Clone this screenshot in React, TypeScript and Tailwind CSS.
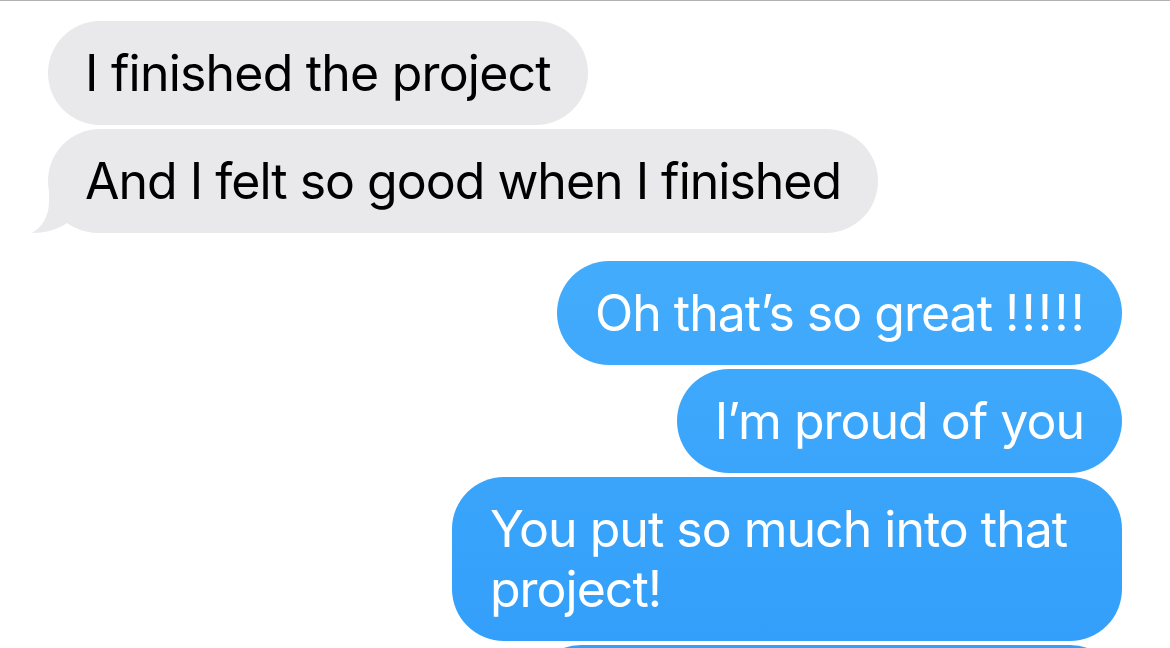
const font = { fontFamily: "Inter, 'Noto Sans', sans-serif" };

function Tail() {
	// iMessage-style tail on the last received bubble
	return (
		<svg
			className="absolute left-[-16px] bottom-0"
			width="70"
			height="60"
			viewBox="0 0 70 60"
			aria-hidden="true"
		>
			<path
				d="M17 0 L17 28 C17 44 10 54 0 60 C12 60 25 57 35 50 C45 57 56 60 70 60 L70 0 Z"
				fill="#e9e9eb"
			/>
		</svg>
	);
}

function Received({ children, tail }: { children: React.ReactNode; tail?: boolean }) {
	return (
		<div className="relative">
			{tail && <Tail />}
			<div className="relative rounded-[52px] bg-[#e9e9eb] px-[37px] py-[22px] text-[50px] leading-[60px] tracking-[-1px] text-black">
				{children}
			</div>
		</div>
	);
}

function Sent({ children, className }: { children?: React.ReactNode; className?: string }) {
	return (
		<div
			className={
				"rounded-[52px] bg-fixed bg-gradient-to-b from-[#4db4fd] to-[#339ffa] px-[38px] py-[22px] text-[50px] leading-[60px] tracking-[-1px] text-white " +
				(className ?? "")
			}
		>
			{children}
		</div>
	);
}

export default function App() {
	return (
		<div
			className="h-[648px] overflow-hidden border-t border-[#b2b2b2] bg-white pt-[20px]"
			style={font}
		>
			{/* Received messages */}
			<div className="flex flex-col items-start gap-1 pl-12">
				<Received>
					<span className="tracking-[-0.8px]">I finished the project</span>
				</Received>
				<Received tail>And I felt so good when I finished</Received>
			</div>

			{/* Sent messages */}
			<div className="mt-7 flex flex-col items-end gap-1 pr-12">
				<Sent>
					Oh that’s so great <span className="tracking-[2px]">!!!!</span>!
				</Sent>
				<Sent>I’m proud of you</Sent>
				<Sent className="max-w-[670px]">You put so much into that project!</Sent>
				<Sent className="h-[104px] w-[593px]" />
			</div>
		</div>
	);
}
